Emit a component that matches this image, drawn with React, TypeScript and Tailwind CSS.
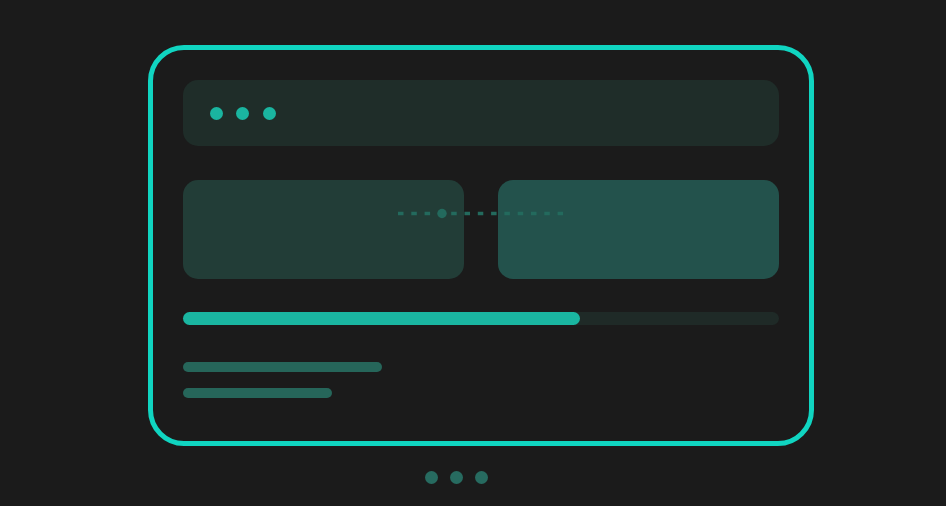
export default function App() {
  return (
    <div className="w-[946px] h-[506px] bg-[#1b1b1b] overflow-hidden">
      <div className="pt-[45px] pl-[148px]">
        <div className="w-[666px] h-[401px] border-[5px] border-[#10d5c1] rounded-[36px] p-[30px] flex flex-col">
          <div className="h-[66px] rounded-[15px] bg-[#1f2d29] flex items-center gap-[13.5px] pl-[26.5px]">
            <span className="shrink-0 w-[13px] h-[13px] rounded-full bg-[#1ab5a0]" />
            <span className="shrink-0 w-[13px] h-[13px] rounded-full bg-[#1ab5a0]" />
            <span className="shrink-0 w-[13px] h-[13px] rounded-full bg-[#1ab5a0]" />
          </div>

          <div className="relative mt-[34px] flex gap-[34px]">
            <div className="flex-1 h-[99px] rounded-[15px] bg-[#223d37]" />
            <div className="flex-1 h-[99px] rounded-[15px] bg-[#23524c]" />
            <svg
              className="absolute left-[215px] top-[27.5px]"
              width="168"
              height="11"
              viewBox="0 0 168 11"
            >
              <line x1="0" y1="5.5" x2="168" y2="5.5" stroke="#236a5d" strokeWidth="3.5" strokeDasharray="5.5 7.8" />
              <circle cx="44" cy="5.5" r="4.7" fill="#236a5d" />
            </svg>
          </div>

          <div className="mt-[33px] h-[13px] rounded-full bg-[#1f2a27]">
            <div className="h-full w-[397px] rounded-full bg-[#1ab6a1]" />
          </div>

          <div className="mt-[37px] h-[10px] w-[199px] rounded-full bg-[#26665a]" />
          <div className="mt-[16px] h-[10px] w-[149px] rounded-full bg-[#26665a]" />
        </div>

        <div className="mt-[25px] ml-[276.5px] flex gap-[12px]">
          <span className="shrink-0 w-[13px] h-[13px] rounded-full bg-[#276b60]" />
          <span className="shrink-0 w-[13px] h-[13px] rounded-full bg-[#276b60]" />
          <span className="shrink-0 w-[13px] h-[13px] rounded-full bg-[#276b60]" />
        </div>
      </div>
    </div>
  );
}
